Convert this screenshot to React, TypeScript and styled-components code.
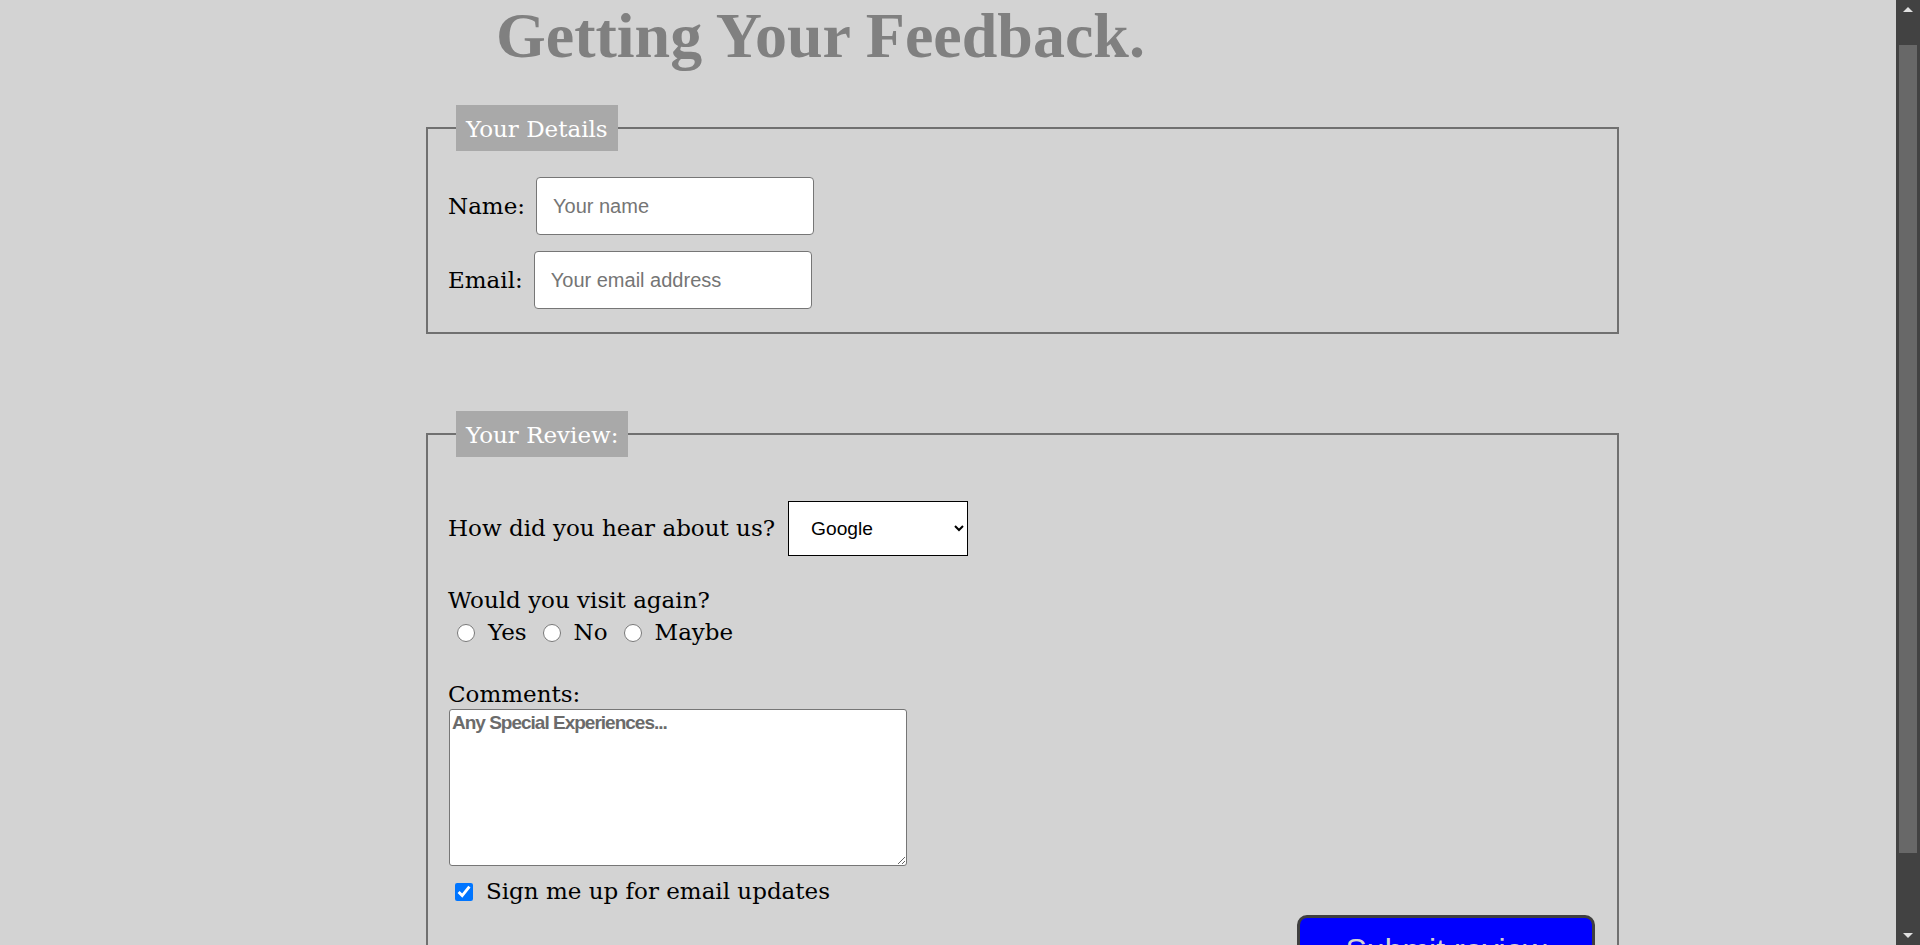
import React from "react";
import styled, { createGlobalStyle } from "styled-components";

const GlobalStyle = createGlobalStyle`
  body {
    margin: 0;
    background: #d3d3d3;
    font-family: "DejaVu Serif", "Liberation Serif", serif;
    font-size: 23px;
    line-height: 27px;
    color: #000;
  }
  * { box-sizing: border-box; }
`;

const Page = styled.div`
  margin-left: 426px;
  width: 1193px;
  padding: 1px 0 37px;
`;

const Title = styled.h1`
  margin: 0 0 34px 70px;
  font-family: "Liberation Serif", serif;
  font-weight: bold;
  font-size: 64px;
  line-height: 70px;
  color: #808080;
`;

const Fieldset = styled.fieldset<{ $padTop: number; $gapTop?: number }>`
  margin: ${(p) => p.$gapTop ?? 0}px 0 0;
  border: 2px solid #707070;
  padding: ${(p) => p.$padTop}px 20px 23px;
  min-width: 0;
`;

const Legend = styled.legend`
  margin-left: 8px;
  padding: 9px 10px 7px;
  background: #a9a9a9;
  color: #fff;
  font-size: 23px;
  line-height: 30px;
`;

const Stack = styled.div`
  display: flex;
  flex-direction: column;
`;

const FieldRow = styled.div<{ $top?: number; $gap?: number }>`
  display: flex;
  align-items: center;
  gap: ${(p) => p.$gap ?? 11}px;
  margin-top: ${(p) => p.$top ?? 0}px;
`;

const Label = styled.label`
  white-space: nowrap;
`;

const TextInput = styled.input`
  width: 278px;
  height: 58px;
  padding: 0 16px;
  border: 1px solid #767676;
  border-radius: 4px;
  background: #fff;
  font-family: "Liberation Sans", Arial, sans-serif;
  font-size: 20px;
  color: #000;
  &::placeholder { color: #757575; }
`;

const Select = styled.select`
  width: 180px;
  height: 55px;
  padding: 0 6px 0 18px;
  border: 1px solid #000;
  border-radius: 0;
  background: #fff;
  color: #000;
  font-family: "Liberation Sans", Arial, sans-serif;
  font-size: 19.2px;
`;

const Line = styled.div<{ $gap: number }>`
  margin-top: ${(p) => p.$gap}px;
`;

const RadioGroup = styled.div`
  display: flex;
  align-items: center;
  gap: 16px;
  padding-left: 9px;
  margin-top: 5px;
`;

const Option = styled.label`
  display: flex;
  align-items: center;
  gap: 13px;
`;

const Choice = styled.input`
  width: 18px;
  height: 18px;
  margin: 0;
`;

const TextArea = styled.textarea`
  margin: 1px 0 0 1px;
  width: 458px;
  height: 157px;
  padding: 2px;
  border: 1px solid #767676;
  border-radius: 3px;
  background: #fff;
  font-family: "Liberation Sans", Arial, sans-serif;
  font-weight: bold;
  font-size: 19px;
  letter-spacing: -1px;
  &::placeholder { color: #6b6b6b; }
`;

const CheckRow = styled.label`
  display: flex;
  align-items: center;
  gap: 13px;
  padding-left: 7px;
  margin-top: 12px;
`;

const SubmitButton = styled.button`
  align-self: flex-end;
  margin: 10px 2px 0 0;
  width: 298px;
  padding: 14px 0;
  border: 3px solid #3f3f3f;
  border-radius: 10px;
  background: #0000ff;
  color: #d3d3d3;
  font-family: "Liberation Sans", Arial, sans-serif;
  font-size: 32px;
  line-height: 37px;
`;

const ScrollTrack = styled.div`
  position: fixed;
  top: 0;
  right: 0;
  width: 24px;
  height: 100vh;
  background: #424242;
`;

const ScrollThumb = styled.div`
  position: absolute;
  top: 45px;
  left: 3px;
  right: 3px;
  height: 808px;
  background: #686868;
`;

const Arrow = styled.div<{ $down?: boolean }>`
  position: absolute;
  left: 7px;
  width: 0;
  height: 0;
  border-left: 5px solid transparent;
  border-right: 5px solid transparent;
  ${(p) =>
    p.$down
      ? "bottom: 7px; border-top: 5px solid #e0e0e0;"
      : "top: 7px; border-bottom: 5px solid #e0e0e0;"}
`;

export default function App() {
  return (
    <>
      <GlobalStyle />
      <Page>
        <Title>Getting Your Feedback.</Title>
        <form onSubmit={(e) => e.preventDefault()}>
          <Fieldset $padTop={26}>
            <Legend>Your Details</Legend>
            <Stack>
              <FieldRow>
                <Label htmlFor="name">Name:</Label>
                <TextInput id="name" type="text" placeholder="Your name" />
              </FieldRow>
              <FieldRow $top={16}>
                <Label htmlFor="email">Email:</Label>
                <TextInput id="email" type="email" placeholder="Your email address" />
              </FieldRow>
            </Stack>
          </Fieldset>
          <Fieldset $padTop={44} $gapTop={77}>
            <Legend>Your Review:</Legend>
            <Stack>
              <FieldRow $gap={13}>
                <Label htmlFor="source">How did you hear about us?</Label>
                <Select id="source" defaultValue="google">
                  <option value="google">Google</option>
                  <option value="friend">Friend</option>
                  <option value="ad">Advertisement</option>
                </Select>
              </FieldRow>
              <Line $gap={31}>Would you visit again?</Line>
              <RadioGroup>
                <Option>
                  <Choice type="radio" name="visit" value="yes" />
                  Yes
                </Option>
                <Option>
                  <Choice type="radio" name="visit" value="no" />
                  No
                </Option>
                <Option>
                  <Choice type="radio" name="visit" value="maybe" />
                  Maybe
                </Option>
              </RadioGroup>
              <Line $gap={35}>Comments:</Line>
              <TextArea placeholder="Any Special Experiences..." />
              <CheckRow>
                <Choice type="checkbox" defaultChecked />
                Sign me up for email updates
              </CheckRow>
              <SubmitButton type="submit">Submit review</SubmitButton>
            </Stack>
          </Fieldset>
        </form>
      </Page>
      <ScrollTrack aria-hidden="true">
        <Arrow />
        <ScrollThumb />
        <Arrow $down />
      </ScrollTrack>
    </>
  );
}
